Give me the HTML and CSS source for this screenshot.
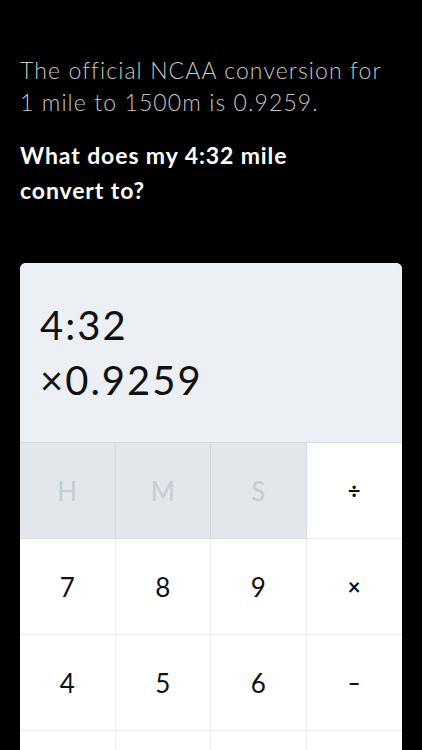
FILE: index.html
```html
<!DOCTYPE html>
<html lang="en">
<head>
  <meta charset="UTF-8">
  <meta name="viewport" content="width=device-width, initial-scale=1.0">
  <title>Mile Converter</title>
  <link rel="stylesheet" href="styles.css">
</head>
<body>

  <div class="intro">
    <p class="intro-text">The official NCAA conversion for 1 mile to 1500m is 0.9259.</p>
    <h2 class="question">What does my 4:32 mile convert to?</h2>
  </div>

  <div class="calculator">
    <div class="display">
      <div class="display-line">4:32</div>
      <div class="display-line">×0.9259</div>
    </div>

    <div class="keypad">
      <button class="key unit">H</button>
      <button class="key unit">M</button>
      <button class="key unit">S</button>
      <button class="key op">÷</button>

      <button class="key">7</button>
      <button class="key">8</button>
      <button class="key">9</button>
      <button class="key op">×</button>

      <button class="key">4</button>
      <button class="key">5</button>
      <button class="key">6</button>
      <button class="key op">–</button>

      <!-- bottom row is scrolled below the fold -->
      <button class="key" aria-label="1"></button>
      <button class="key" aria-label="2"></button>
      <button class="key" aria-label="3"></button>
      <button class="key op" aria-label="plus"></button>
    </div>
  </div>

</body>
</html>
```

FILE: styles.css
```css
body {
  font-family: 'Lato', 'Open Sans', sans-serif;
  background-color: #000;
  margin: 0;
  padding: 0 20px;
  height: 750px;
  overflow: hidden;
}

.intro {
  padding-top: 54px;
}

.intro-text {
  margin: 0;
  font-size: 23px;
  font-weight: 300;
  line-height: 32px;
  letter-spacing: 1.1px;
  color: #c6c6c6;
  width: 380px;
}

.question {
  margin: 20px 0 0;
  font-size: 23px;
  font-weight: bold;
  line-height: 35px;
  letter-spacing: 0.9px;
  color: #fff;
  width: 300px;
}

/* Calculator card */
.calculator {
  margin-top: 55px;
  background-color: #fff;
  border-radius: 6px;
  overflow: hidden;
}

.display {
  background-color: #eceff4;
  padding: 35px 20px 34px;
  border-bottom: 1px solid #d6d9df;
}

.display-line {
  font-size: 40px;
  line-height: 55px;
  letter-spacing: 2px;
  color: #111;
}

.keypad {
  display: grid;
  grid-template-columns: repeat(4, 1fr);
}

.key {
  font-family: inherit;
  height: 96px;
  border: none;
  border-right: 1px solid #eceef2;
  border-bottom: 1px solid #eceef2;
  background-color: #fff;
  color: #111;
  font-size: 26px;
  padding: 0;
  cursor: pointer;
}

.key:nth-child(4n) {
  border-right: none;
}

.key.unit {
  background-color: #e3e6eb;
  color: #c6cad1;
  border-color: #d6d9df;
}

.key.op {
  font-size: 22px;
  font-weight: bold;
}
```
